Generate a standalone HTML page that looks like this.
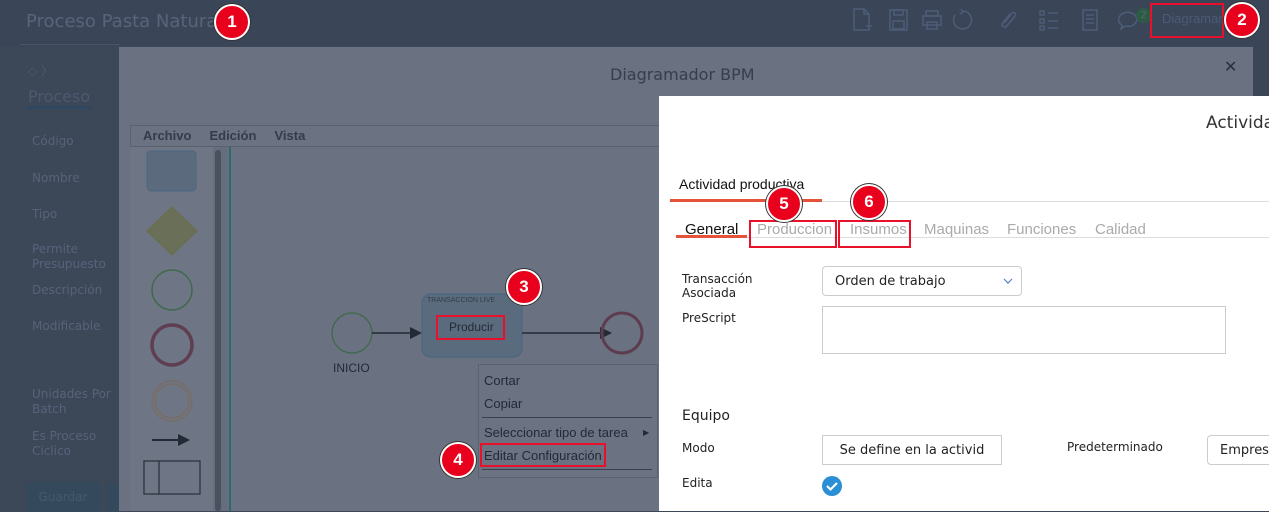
<!DOCTYPE html>
<html><head><meta charset="utf-8"><style>
*{box-sizing:border-box;margin:0;padding:0}
body{width:1269px;height:511px;overflow:hidden;position:relative;background:#3c4758;font-family:"DejaVu Sans","Liberation Sans",sans-serif}
.a{position:absolute;white-space:nowrap}
.lbl{position:absolute;left:32px;color:#56637a;font-size:12px;line-height:15px}
.badge{position:absolute;width:36px;height:36px;border-radius:50%;background:#e8001c;border:2px solid #fff;box-shadow:0 0 0 1px #333;color:#fff;font:bold 17px "Liberation Sans",sans-serif;text-align:center;line-height:32px}
.rb{position:absolute;border:2px solid #e8102a}
.ms{font-family:"Liberation Sans",sans-serif}
</style></head><body>
<!-- top bar -->
<div class="a" style="left:0;top:0;width:1269px;height:46px;background:#3a4557"></div>
<div class="a" style="left:26px;top:11px;font-size:18px;color:#58647a">Proceso Pasta Natural</div>
<div class="a" style="left:20px;top:44px;width:100px;height:1px;background:#4a5567"></div>
<svg class="a" style="left:850px;top:6px" width="300" height="30" fill="none" stroke="#4d5d78" stroke-width="1.5">
<path d="M4 3h10l5 5v16H4z M14 3v5h5 M16 20h6 M19 17v6"/>
<rect x="40" y="4" width="17" height="20"/><rect x="44" y="4" width="9" height="5"/><rect x="43" y="15" width="11" height="8"/>
<rect x="76" y="5" width="12" height="5"/><rect x="73" y="10" width="18" height="9"/><rect x="77" y="16" width="10" height="7"/>
<path d="M113 5a9 9 0 1 1 -8 4 M111 3l2 3-3 2"/>
<path d="M160 8l-8 10a3 3 0 0 0 4 3l9-11a2 2 0 0 0-3-3l-8 10"/>
<path d="M190 5h4v4h-4z M190 13h4v4h-4z M190 20h4v4h-4z M198 7h10 M198 15h10 M198 22h10"/>
<rect x="233" y="4" width="14" height="20"/><path d="M236 9h8 M236 13h8 M236 17h8"/>
<path d="M272 8a9 7 0 1 1 3 12l-4 3 1-4a9 7 0 0 1 0-11"/>
</svg>
<div class="a" style="left:1136px;top:8px;width:15px;height:15px;border-radius:50%;background:#2e5a48;color:#4d6d60;font-size:10px;text-align:center;line-height:15px">2</div>
<div class="a ms" style="left:1162px;top:11px;font-size:13px;color:#4b5b78">Diagramar</div>
<div class="rb" style="left:1150px;top:3px;width:74px;height:35px"></div>
<!-- left panel -->
<div class="a" style="left:28px;top:62px;color:#4d5c72;font-size:12px">◇ 〉</div>
<div class="a" style="left:28px;top:87px;color:#4c5a70;font-size:16px">Proceso</div>
<div class="a" style="left:26px;top:106px;width:66px;height:3px;background:#2f4860"></div>
<div class="lbl" style="top:134px">Código</div>
<div class="lbl" style="top:171px">Nombre</div>
<div class="lbl" style="top:207px">Tipo</div>
<div class="lbl" style="top:242px">Permite<br>Presupuesto</div>
<div class="lbl" style="top:283px">Descripción</div>
<div class="lbl" style="top:319px">Modificable</div>
<div class="lbl" style="top:387px">Unidades Por<br>Batch</div>
<div class="lbl" style="top:429px">Es Proceso<br>Ciclico</div>
<div class="a" style="left:26px;top:482px;width:74px;height:30px;border-radius:3px;background:#344a5c;color:#425a6c;font-size:12px;text-align:center;line-height:30px">Guardar</div>
<div class="a" style="left:106px;top:482px;width:20px;height:30px;border-radius:3px;background:#344a5c"></div>
<!-- modal -->
<div class="a" style="left:119px;top:47px;width:1134px;height:464px;background:#6a7180"></div>
<div class="a" style="left:1253px;top:46px;width:16px;height:465px;background:#3a4556"></div>
<div class="a" style="left:610px;top:65px;font-size:16px;color:#363e4c">Diagramador BPM</div>
<div class="a" style="left:1224px;top:57px;font-size:16px;color:#2a303a">✕</div>
<div class="a" style="left:130px;top:125px;width:540px;height:22px;background:#6b7282;border:1px solid #5a6170"></div>
<div class="a ms" style="left:143px;top:128px;font-size:13px;font-weight:bold;color:#343c4a">Archivo&nbsp;&nbsp;&nbsp;&nbsp;&nbsp;Edición&nbsp;&nbsp;&nbsp;&nbsp;&nbsp;Vista</div>
<div class="a" style="left:130px;top:147px;width:83px;height:364px;background:#6e7584"></div>
<div class="a" style="left:213px;top:147px;width:15px;height:364px;background:#666d7c"></div>
<div class="a" style="left:215px;top:150px;width:6px;height:361px;border-radius:3px;background:#4a505c"></div>
<div class="a" style="left:229px;top:147px;width:2px;height:364px;background:#2a6b72"></div>
<svg class="a" style="left:130px;top:147px" width="540" height="364">
<rect x="17" y="4" width="49" height="40" rx="4" fill="#5b6b7d" stroke="#4a6782"/>
<path d="M42 60l25 24-25 24-25-24z" fill="#6a6f58" stroke="#6a6c4a"/>
<circle cx="42" cy="143" r="20" fill="none" stroke="#3f6a4c" stroke-width="1.5"/>
<circle cx="42" cy="198" r="20" fill="none" stroke="#5e3e50" stroke-width="3.5"/>
<circle cx="42" cy="254" r="20" fill="none" stroke="#786c62" stroke-width="1.3"/><circle cx="42" cy="254" r="17" fill="none" stroke="#786c62" stroke-width="1.3"/>
<path d="M22 293h28" stroke="#232a36" stroke-width="2"/><path d="M48 287l12 6-12 6z" fill="#232a36"/>
<rect x="14" y="314" width="56" height="33" fill="none" stroke="#2d333e" stroke-width="1.3"/><path d="M29 314v33" stroke="#2d333e" stroke-width="1.3"/>
<!-- diagram -->
<circle cx="222" cy="186" r="20" fill="none" stroke="#3e6a4a" stroke-width="1.3"/>
<path d="M242 186h40" stroke="#232a36" stroke-width="1.5"/><path d="M280 180l12 6-12 6z" fill="#232a36"/>
<rect x="292" y="147" width="100" height="63" rx="9" fill="#5a6b7e" stroke="#4b6780" stroke-width="1.3"/>
<path d="M392 186h80" stroke="#232a36" stroke-width="1.5"/><path d="M470 180l12 6-12 6z" fill="#232a36"/>
<circle cx="492" cy="186" r="20" fill="none" stroke="#5c3c4e" stroke-width="3"/>
</svg>
<div class="a ms" style="left:427px;top:297px;font-size:7px;color:#343c4a">TRANSACCION LIVE</div>
<div class="a ms" style="left:449px;top:320px;font-size:12px;color:#232a36">Producir</div>
<div class="rb" style="left:436px;top:315px;width:69px;height:25px"></div>
<div class="a ms" style="left:333px;top:361px;font-size:12px;color:#232a36">INICIO</div>
<!-- context menu -->
<div class="a" style="left:478px;top:364px;width:180px;height:114px;background:#6b7282;border:1px solid #5a6170"></div>
<div class="a ms" style="left:484px;top:373px;font-size:13px;color:#232a36">Cortar</div>
<div class="a ms" style="left:484px;top:396px;font-size:13px;color:#232a36">Copiar</div>
<div class="a" style="left:482px;top:417px;width:170px;height:1px;background:#3a404c"></div>
<div class="a ms" style="left:484px;top:425px;font-size:13px;color:#232a36">Seleccionar tipo de tarea</div>
<div class="a" style="left:643px;top:428px;font-size:8px;color:#232a36">▶</div>
<div class="a ms" style="left:484px;top:448px;font-size:13px;color:#232a36">Editar Configuración</div>
<div class="rb" style="left:480px;top:443px;width:126px;height:24px"></div>
<div class="a" style="left:482px;top:469px;width:170px;height:1px;background:#3a404c"></div>
<!-- white panel -->
<div class="a" style="left:659px;top:96px;width:610px;height:415px;background:#fff"></div>
<div class="a" style="left:1206px;top:113px;font-size:17px;color:#333">Activida</div>
<div class="a ms" style="left:679px;top:176px;font-size:14px;color:#111">Actividad productiva</div>
<div class="a" style="left:669px;top:201px;width:600px;height:1px;background:#ddd"></div>
<div class="a" style="left:670px;top:199px;width:152px;height:3px;background:#e4533a"></div>
<div class="a ms" style="left:685px;top:221px;font-size:15px;color:#111">General</div>
<div class="a ms" style="left:757px;top:221px;font-size:15px;color:#aaa">Produccion</div>
<div class="a ms" style="left:850px;top:221px;font-size:15px;color:#aaa">Insumos</div>
<div class="a ms" style="left:924px;top:221px;font-size:15px;color:#aaa">Maquinas</div>
<div class="a ms" style="left:1007px;top:221px;font-size:15px;color:#aaa">Funciones</div>
<div class="a ms" style="left:1095px;top:221px;font-size:15px;color:#aaa">Calidad</div>
<div class="a" style="left:676px;top:237px;width:593px;height:1px;background:#ddd"></div>
<div class="a" style="left:676px;top:235px;width:71px;height:3px;background:#e4533a"></div>
<div class="rb" style="left:749px;top:220px;width:88px;height:28px"></div>
<div class="rb" style="left:838px;top:220px;width:73px;height:28px"></div>
<div class="a" style="left:682px;top:272px;font-size:12px;line-height:14px;color:#222">Transacción<br>Asociada</div>
<div class="a" style="left:822px;top:266px;width:200px;height:30px;border:1px solid #ccc;border-radius:4px;font-size:13px;color:#222;padding:7px 0 0 12px">Orden de trabajo</div>
<svg class="a" style="left:1003px;top:277px" width="10" height="8"><path d="M1 2l4 4 4-4" fill="none" stroke="#4a80c0" stroke-width="1.2"/></svg>
<div class="a" style="left:682px;top:311px;font-size:12px;color:#222">PreScript</div>
<div class="a" style="left:822px;top:306px;width:404px;height:48px;border:1px solid #ccc"></div>
<div class="a" style="left:682px;top:408px;font-size:14px;color:#222">Equipo</div>
<div class="a" style="left:682px;top:441px;font-size:12px;color:#222">Modo</div>
<div class="a" style="left:822px;top:435px;width:180px;height:30px;border:1px solid #ccc;font-size:13px;color:#222;text-align:center;line-height:30px">Se define en la activid</div>
<div class="a" style="left:1067px;top:440px;font-size:12px;color:#222">Predeterminado</div>
<div class="a" style="left:1207px;top:435px;width:80px;height:30px;border:1px solid #ccc;border-radius:4px;font-size:13px;color:#222;padding:7px 0 0 12px">Empres</div>
<div class="a" style="left:682px;top:476px;font-size:12px;color:#222">Edita</div>
<svg class="a" style="left:821px;top:475px" width="22" height="22"><circle cx="11" cy="11" r="10" fill="#2a8fd4"/><path d="M6 11l3.5 3.5L16 8" fill="none" stroke="#fff" stroke-width="2.2"/></svg>
<!-- badges -->
<div class="badge" style="left:214px;top:4px">1</div>
<div class="badge" style="left:1224px;top:2px">2</div>
<div class="badge" style="left:506px;top:269px">3</div>
<div class="badge" style="left:440px;top:442px">4</div>
<div class="badge" style="left:766px;top:186px">5</div>
<div class="badge" style="left:851px;top:184px">6</div>
</body></html>
